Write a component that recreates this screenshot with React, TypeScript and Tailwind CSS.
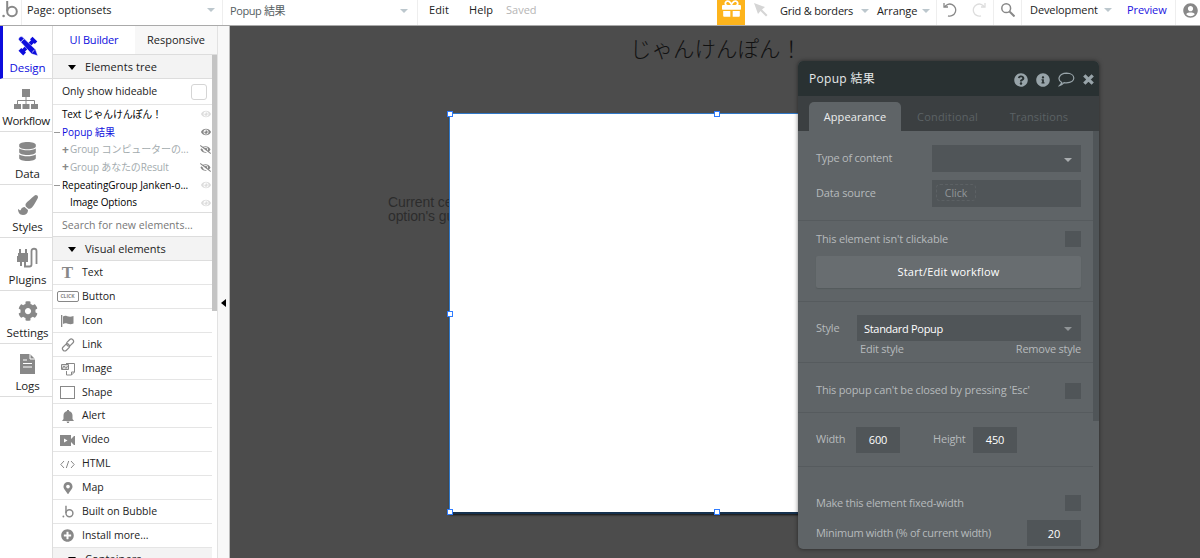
import type { ReactNode } from "react";
import clsx from "clsx";
import { FaQuestionCircle, FaInfoCircle, FaBell, FaMapMarkerAlt, FaPlusCircle, FaGift, FaUserCircle, FaDatabase, FaPaintBrush, FaCog, FaEye, FaEyeSlash } from "react-icons/fa";

function Caret({ className }: { className?: string }) {
  return <span className={clsx("inline-block border-x-4 border-t-4 border-x-transparent", className)}></span>;
}

function BubbleMark({ className }: { className?: string }) {
  return (
    <svg viewBox="0 0 16 18" className={className} fill="none" stroke="currentColor" strokeWidth="2">
      <path d="M5.200 1v10" />
      <circle cx="10" cy="11.500" r="4.800" />
      <circle cx="1.600" cy="16" r="1.300" fill="currentColor" stroke="none" />
    </svg>
  );
}

function DesignIcon() {
  return (
    <svg viewBox="0 0 20 20" className="w-5 h-5" fill="currentColor">
      <path d="M14.500.8 19.300 5.500 16.800 8l-1-1L7 15.500l1 1L5.200 19.500.5 14.800 3.300 12l1 1L13 4.300l-1-1z" />
      <path d="M.6 3.800C.6 1.500 2 .5 4 .6L17.500 13.500 19.800 19.800 13.500 17.800z" stroke="#fff" strokeWidth=".5" />
      <path d="M2.800 6 6 2.800M14.200 16.300l2.300-2.300" stroke="#fff" strokeWidth=".8" />
    </svg>
  );
}

function WorkflowIcon() {
  return (
    <svg viewBox="0 0 24 20" className="w-6 h-5" fill="currentColor">
      <path d="M8 0h8v8H8zM0 15h7v5H0zM8.500 15h7v5h-7zM17 15h7v5h-7z" />
      <path d="M12 7v8M3.500 15v-3.500h17V15" fill="none" stroke="currentColor" />
    </svg>
  );
}

function PluginsIcon() {
  return (
    <svg viewBox="0 0 22 22" className="w-[22px] h-[22px]" fill="currentColor">
      <path d="M1 6h10v9H9v4H7v-4H5v4H3v-4H0V9h1zM2 2h2v4H2zM8 2h2v4H8z" />
      <path d="M7 19.500h5.500c1.500 0 2-1 2-2V4c0-3 5-3 5 0v13" fill="none" stroke="currentColor" strokeWidth="1.800" />
    </svg>
  );
}

function LogsIcon() {
  return (
    <svg viewBox="0 0 15 20" className="w-[15px] h-5">
      <path d="M0 0h10l5 5v15H0z" fill="currentColor" />
      <path d="M10 0v5h5M3 6h4M3 9.500h9M3 13h9" fill="none" stroke="#fff" />
    </svg>
  );
}

const rail = [
  { label: "Design", icon: <DesignIcon /> },
  { label: "Workflow", icon: <WorkflowIcon />, tight: true },
  { label: "Data", icon: <FaDatabase size={19} /> },
  { label: "Styles", icon: <FaPaintBrush size={20} /> },
  { label: "Plugins", icon: <PluginsIcon /> },
  { label: "Settings", icon: <FaCog size={20} /> },
  { label: "Logs", icon: <LogsIcon /> },
];

const tree = [
  { label: "Text じゃんけんぽん！", pad: "pl-[9px]", color: "text-black tracking-[-0.2px]", eye: "faint" },
  { label: "Popup 結果", pad: "pl-[9px]", color: "text-[#0d0ddd]", eye: "on", dash: true },
  { label: "Group コンピューターの...", pad: "pl-[9px]", color: "text-[#a3abae] tracking-[-0.1px]", eye: "off", plus: true },
  { label: "Group あなたのResult", pad: "pl-[9px]", color: "text-[#a3abae] tracking-[-0.15px]", eye: "off", plus: true },
  { label: "RepeatingGroup Janken-o...", pad: "pl-[9px]", color: "text-black tracking-[-0.05px]", eye: "faint", dash: true },
  { label: "Image Options", pad: "pl-[17px]", color: "text-black tracking-[-0.1px]", eye: "faint" },
];

const visualElements: { label: string; icon: ReactNode }[] = [
  { label: "Text", icon: <span className="font-['Liberation_Serif'] font-bold text-[17px]">T</span> },
  { label: "Button", icon: <span className="w-[22px] h-[11px] border border-[#888] rounded-[2px] text-[5px] leading-[9px] font-bold text-center">CLICK</span> },
  {
    label: "Icon",
    icon: (
      <svg viewBox="0 0 13 12" className="w-[13px] h-3" fill="currentColor">
        <path d="M0 0h1.300v12H0zM2 1.500c3-2 5 1.500 10.500-.5v7.500C8 10.500 5 7 2 9z" />
      </svg>
    ),
  },
  {
    label: "Link",
    icon: (
      <svg viewBox="0 0 14 14" className="w-3.5 h-3.5" fill="none" stroke="currentColor" strokeWidth="1.200">
        <rect x="5" y="2.300" width="8" height="4.600" rx="2.300" transform="rotate(-45 9 4.600)" />
        <rect x="1" y="7.100" width="8" height="4.600" rx="2.300" transform="rotate(-45 5 9.400)" />
      </svg>
    ),
  },
  {
    label: "Image",
    icon: (
      <svg viewBox="0 0 14 14" className="w-3.5 h-3.5" fill="none" stroke="currentColor">
        <path d="M5 1.500h8.500V10L10.500 13h-5V9M10.500 13v-3h3" />
        <path d="M.5 2.500h7v5h-7zM1 7l2-3 2 2.500L6.500 4" fill="#ddd" />
      </svg>
    ),
  },
  { label: "Shape", icon: <span className="w-[15px] h-[13px] border border-[#888]"></span> },
  {
    label: "Alert",
    icon: (
      <svg viewBox="0 0 12 13" className="w-3 h-[13px]" fill="currentColor">
        <path d="M5 0h2v1c2.500.5 3.500 2.500 3.500 4.500v3.500L12 11H0l1.500-2V5.500C1.500 3.500 2.500 1.500 5 1zM4.500 11.500h3L6.800 13H5.200z" />
      </svg>
    ),
  },
  {
    label: "Video",
    icon: (
      <svg viewBox="0 0 15 11" className="w-[15px] h-[11px]">
        <path d="M0 0h11v4l3-3h1v9h-1l-3-3v4H0z" fill="currentColor" />
        <path d="M4 3.500 7.500 5.500 4 7.500z" fill="#fff" />
      </svg>
    ),
  },
  {
    label: "HTML",
    icon: (
      <svg viewBox="0 0 15 9" className="w-[15px] h-[9px]" fill="none" stroke="currentColor">
        <path d="M4 1 .8 4.500 4 8M11 1l3.200 3.500L11 8M8.700 1 6.300 8" />
      </svg>
    ),
  },
  { label: "Map", icon: <FaMapMarkerAlt size={12} /> },
  { label: "Built on Bubble", icon: <BubbleMark className="w-3 h-[13px]" /> },
  { label: "Install more...", icon: <FaPlusCircle size={13} /> },
];

function Header() {
  return (
    <header className="flex h-[26px] border-b border-[#aaa] bg-white text-[11px] leading-5 tracking-[0.1px] shrink-0 overflow-hidden text-[#222]">
      <div className="w-[22px] border-r border-[#eee] text-[#888] shrink-0">
        <BubbleMark className="w-4 h-[18px] ml-0.5" />
      </div>
      <div className="w-[201px] border-r border-[#eee] flex justify-between items-center pl-[5px] pr-[7px] h-full pb-[5px] tracking-normal shrink-0">
        Page: optionsets
        <Caret className="border-t-[#bcc7cd]" />
      </div>
      <div className="w-[195px] border-r border-[#eee] flex justify-between items-center pl-[7px] pr-[9px] h-full pb-1 text-[#555e62] tracking-[-0.4px] shrink-0">
        Popup 結果
        <Caret className="border-t-[#bcc7cd]" />
      </div>
      <div className="w-[299px] flex pl-[11px] shrink-0">
        <span className="w-10">Edit</span>
        <span className="w-[37px]">Help</span>
        <span className="text-[#b5b5b5] tracking-normal">Saved</span>
      </div>
      <div className="w-7 bg-[#fdb41c] flex justify-center text-white shrink-0">
        <FaGift size={19} className="mt-[-1px]" />
      </div>
      <div className="w-[35px] pl-[9px] pt-[3px] shrink-0">
        <svg viewBox="0 0 14 14" className="w-3.5 h-3.5" fill="#d5d5d5">
          <path d="M0 0 11 4 8 6.500l5.500 5.500L12 13.500 6.500 8 4 11z" />
        </svg>
      </div>
      <div className="w-[97px] flex items-center h-[21px] gap-[5px] tracking-[-0.15px] shrink-0">
        <span className="w-[77px] whitespace-nowrap tracking-[-0.22px]">Grid &amp; borders</span>
        <Caret className="border-t-[#bcc7cd] mr-px -ml-px" />
      </div>
      <div className="w-[59px] flex items-center h-[21px] gap-[5px] tracking-[-0.1px] shrink-0">
        Arrange
        <Caret className="border-t-[#bcc7cd]" />
      </div>
      <div className="w-[58px] border-x border-[#eee] flex gap-[15px] pl-1.5 pt-[3px] text-[#888] shrink-0">
        <svg viewBox="0 0 14 14" className="w-3.5 h-3.5" fill="none" stroke="currentColor" strokeWidth="1.300">
          <path d="M1 0v4h4M1.500 4A6 6 0 1 1 5 12.800" />
        </svg>
        <svg viewBox="0 0 14 14" className="w-3.5 h-3.5" fill="none" stroke="#ddd" strokeWidth="1.300">
          <path d="M13 0v4H9M12.500 4A6 6 0 1 0 9 12.800" />
        </svg>
      </div>
      <div className="w-7 border-r border-[#eee] pl-[7px] pt-[3px] text-[#888] shrink-0">
        <svg viewBox="0 0 14 14" className="w-3.5 h-3.5" fill="none" stroke="currentColor">
          <circle cx="5.200" cy="5.200" r="4.400" strokeWidth="1.500" />
          <path d="M8.500 8.500l5 5" strokeWidth="2" />
        </svg>
      </div>
      <div className="w-[105px] flex items-center h-5 gap-[6px] pl-2 tracking-[-0.1px] shrink-0">
        Development
        <Caret className="border-t-[#bcc7cd]" />
      </div>
      <div className="w-[49px] border-r border-[#eee] text-[#1a12e0] tracking-[-0.1px] shrink-0">Preview</div>
      <div className="pl-[7px] pt-[3px] text-[#888]">
        <FaUserCircle size={15} />
      </div>
    </header>
  );
}

function SectionTitle({ children }: { children: ReactNode }) {
  return (
    <div className="h-6 flex items-center bg-[#f3f3f3] border-b border-[#ddd] pl-[15px] pt-px gap-[9px] text-[11px] tracking-[0.08px]">
      <Caret className="border-t-[5px] border-t-black" />
      {children}
    </div>
  );
}

function Sidebar() {
  return (
    <>
      <nav className="w-[53px] border-r border-[#ddd] bg-white shrink-0">
        {rail.map((item, i) => (
          <div
            key={item.label}
            className={clsx("h-[53px] border-b border-[#ddd] flex flex-col items-center", i === 0 ? "border-l-[3px] border-l-[#0d0ddd] text-[#0d0ddd]" : !item.tight && "pl-[3px]")}
          >
            <div className={clsx("h-8 pt-2 flex items-center", i > 0 && "text-[#888]")}>{item.icon}</div>
            <span className={clsx("leading-[21px] text-[11.500px]", item.tight ? "tracking-[-0.45px]" : "tracking-[-0.1px]")}>{item.label}</span>
          </div>
        ))}
      </nav>
      <aside className="w-[164px] bg-white shrink-0 overflow-hidden">
        <div className="h-[29px] flex border-b border-[#ddd] text-[11px] leading-[27px] text-center">
          <div className="w-[82px] text-[#0d0ddd] tracking-[-0.2px]">UI Builder</div>
          <div className="flex-1 bg-[#f7f7f7]">Responsive</div>
        </div>
        <div className="flex">
          <div className="w-[159px]">
            <SectionTitle>Elements tree</SectionTitle>
            <div className="h-[26px] border-b border-[#e5e5e5] flex items-center justify-between pl-[9px] pr-[5px] text-[10.500px]">
              <span className="pt-px tracking-[-0.05px]">Only show hideable</span>
              <span className="w-4 h-4 border border-[#d5d5d5] rounded-[3px]"></span>
            </div>
            <div className="h-[108px] border-b border-[#ddd]">
              {tree.map((row) => (
                <div key={row.label} className={clsx("h-[17.700px] flex items-center text-[10px] pt-px pr-px relative", row.pad, row.color)}>
                  {row.dash && <span className="absolute left-px w-[6px] h-px bg-[#999]"></span>}
                  {row.plus && <span className="font-bold text-xs text-[#888] w-2">+</span>}
                  <span className="flex-1 whitespace-nowrap">{row.label}</span>
                  {row.eye === "off" ? <FaEyeSlash size={11} className="text-[#888]" /> : <FaEye size={10} className={row.eye === "on" ? "text-[#888]" : "text-[#ddd]"} />}
                </div>
              ))}
            </div>
            <div className="h-6 border-b border-[#ddd] pl-[9px] text-[10.500px] leading-[25px] tracking-[0.05px] text-[#777]">Search for new elements...</div>
            <SectionTitle>
              <span className="tracking-[0.02px]">Visual elements</span>
            </SectionTitle>
            {visualElements.map((el) => (
              <div key={el.label} className="h-[23.900px] border-b border-[#e5e5e5] flex items-center pt-px text-[10.500px]">
                <span className="w-[29px] flex justify-center items-center text-[#888]">{el.icon}</span>
                {el.label}
              </div>
            ))}
            <SectionTitle>Containers</SectionTitle>
          </div>
          <div className="w-[5px] h-64 bg-[#c4c4c4]"></div>
        </div>
      </aside>
      <div className="w-[13px] bg-[#f8f8f8] border-l border-[#e2e2e2] border-r border-r-[#bbb] flex items-center justify-center shrink-0">
        <span className="border-y-4 border-r-[5px] border-y-transparent border-r-black mb-[-21px]"></span>
      </div>
    </>
  );
}

const handles = [
  "-left-[3px] -top-[3px]",
  "left-[264px] -top-[3px]",
  "-left-[3px] top-[197px]",
  "-left-[3px] -bottom-[3px]",
  "left-[264px] -bottom-[3px]",
];

function Checkbox() {
  return <span className="w-4 h-4 bg-[#505558] shrink-0"></span>;
}

function PropertyPanel() {
  return (
    <div className="absolute left-[568px] top-[35px] w-[301px] h-[488px] rounded-[5px] overflow-hidden bg-[#5f6467] shadow-[0_0_4px_rgba(0,0,0,0.5)] text-[11px] text-[#b6babc]">
      <div className="h-[35px] bg-[#293132] flex items-center pl-[11px] pr-[5px] text-xs text-[#e6e9ea]">
        <span className="flex-1 tracking-[0.3px]">Popup 結果</span>
        <div className="flex items-center gap-2 pt-[2px] text-[#98a4a9]">
          <FaQuestionCircle size={14} />
          <FaInfoCircle size={14} />
          <svg viewBox="0 0 17 15" className="w-[17px] h-[15px]" fill="none" stroke="currentColor" strokeWidth="1.200">
            <path d="M3.800 10.500C-1 8 .5 1.500 8.500 1.200c9.500.1 10 9.300 0 9.600-1 0-1.800 0-2.500-.2C4.800 12 3.500 13.300 1.500 13.700c1.300-1.200 2-2 2.300-3.200z" />
          </svg>
          <svg viewBox="0 0 11 11" className="w-[11px] h-[11px]" stroke="currentColor" strokeWidth="3.300">
            <path d="M1.300 1.300l8.400 8.400M9.700 1.300 1.300 9.700" />
          </svg>
        </div>
      </div>
      <div className="h-[35px] bg-[#3b3f41] pl-[11px] pt-1.5 flex leading-[30px] text-[#5c6265]">
        <span className="w-[92px] text-center rounded-t-[5px] bg-[#5f6467] text-[#eceeee] tracking-[0.1px]">Appearance</span>
        <span className="w-[93px] text-center tracking-[0.2px]">Conditional</span>
        <span className="w-[90px] text-center tracking-[0.15px]">Transitions</span>
      </div>
      <div className="flex">
        <div className="w-[295px]">
          <div className="h-[90px] border-b border-[#565b5e] pl-[18px] pr-3 pt-3.5 flex flex-col gap-2">
            <div className="flex justify-between items-center">
              <span className="tracking-[-0.25px]">Type of content</span>
              <div className="w-[149px] h-[27px] bg-[#505558] flex items-center justify-end pr-[9px] pt-0.5">
                <Caret className="border-t-[#a9adaf]" />
              </div>
            </div>
            <div className="flex justify-between items-center">
              <span className="tracking-[-0.15px]">Data source</span>
              <div className="w-[149px] h-[27px] bg-[#505558] p-1">
                <div className="w-10 h-[17px] rounded-[4px] border border-dashed border-[#5c6164] text-center leading-[17px] text-[10.500px] text-[#92979a]">Click</div>
              </div>
            </div>
          </div>
          <div className="h-[81px] border-b border-[#565b5e] pl-[18px] pr-3 pt-2.5">
            <div className="flex justify-between items-center h-4">
              <span className="tracking-[-0.15px]">This element isn't clickable</span>
              <Checkbox />
            </div>
            <div className="mt-[9px] h-8 rounded-[2px] bg-[#686d70] text-white text-center leading-8 tracking-[0.22px] shadow-[0_1px_1px_#555a5d]">Start/Edit workflow</div>
          </div>
          <div className="h-[61px] border-b border-[#565b5e] pl-[18px] pr-3 pt-[13px]">
            <div className="flex justify-between items-center">
              <span className="tracking-[-0.2px]">Style</span>
              <div className="w-[224px] h-[26px] bg-[#505558] text-white flex items-center justify-between pl-[7px] pr-[9px] pt-0.5 tracking-[-0.3px]">
                Standard Popup
                <Caret className="border-t-[#8f9496]" />
              </div>
            </div>
            <div className="flex justify-between pl-11 leading-4 tracking-[-0.23px]">
              <span>Edit style</span>
              <span>Remove style</span>
            </div>
          </div>
          <div className="h-[50px] border-b border-[#565b5e] pl-[18px] pr-3 pt-1.5 flex justify-between items-center">
            <span className="tracking-[-0.18px]">This popup can't be closed by pressing 'Esc'</span>
            <Checkbox />
          </div>
          <div className="h-[54px] border-b border-[#565b5e] pl-[18px] flex items-center tracking-[-0.2px]">
            <span className="w-10">Width</span>
            <span className="w-11 h-[26px] bg-[#505558] text-white text-center leading-[26px]">600</span>
            <span className="w-[73px] pl-[33px]">Height</span>
            <span className="w-11 h-[26px] bg-[#505558] text-white text-center leading-[26px]">450</span>
          </div>
          <div className="pl-[18px] pr-3 pt-7">
            <div className="flex justify-between items-center h-4">
              <span className="tracking-[-0.24px]">Make this element fixed-width</span>
              <Checkbox />
            </div>
            <div className="flex justify-between items-center mt-[9px]">
              <span className="tracking-[-0.29px]">Minimum width (% of current width)</span>
              <span className="w-[54px] h-[26px] bg-[#505558] text-white text-center leading-[27px]">20</span>
            </div>
          </div>
        </div>
        <div className="w-1.5 h-[290px] bg-[#505558]"></div>
      </div>
    </div>
  );
}

export default function App() {
  return (
    <div className="w-[1200px] h-[558px] flex flex-col overflow-hidden bg-white text-[#222] font-['Open_Sans','Noto_Sans_CJK_JP',sans-serif]">
      <Header />
      <div className="flex h-[532px]">
        <Sidebar />
        <main className="flex-1 relative overflow-hidden bg-[#4c4c4c]">
          <h1 className="absolute left-[400px] top-[7px] text-[21.500px] font-light leading-8 text-[#111] whitespace-nowrap">じゃんけんぽん！</h1>
          <p className="absolute left-[158px] top-[169px] text-sm leading-[14px] tracking-[-0.1px] text-[#2c2c2c] whitespace-nowrap font-['Liberation_Sans']">
            Current cell's
            <br />
            option's gu
          </p>
          <div className="absolute left-[219px] top-[87px] w-[536px] h-[401px] bg-white border border-[#2f78c8] border-b-2 border-b-[#16324f] shadow-[0_2px_2px_-1px_#111]">
            {handles.map((pos) => (
              <span key={pos} className={clsx("absolute w-1.5 h-1.5 bg-white border border-[#2f7cff]", pos)}></span>
            ))}
          </div>
          <PropertyPanel />
        </main>
      </div>
    </div>
  );
}
